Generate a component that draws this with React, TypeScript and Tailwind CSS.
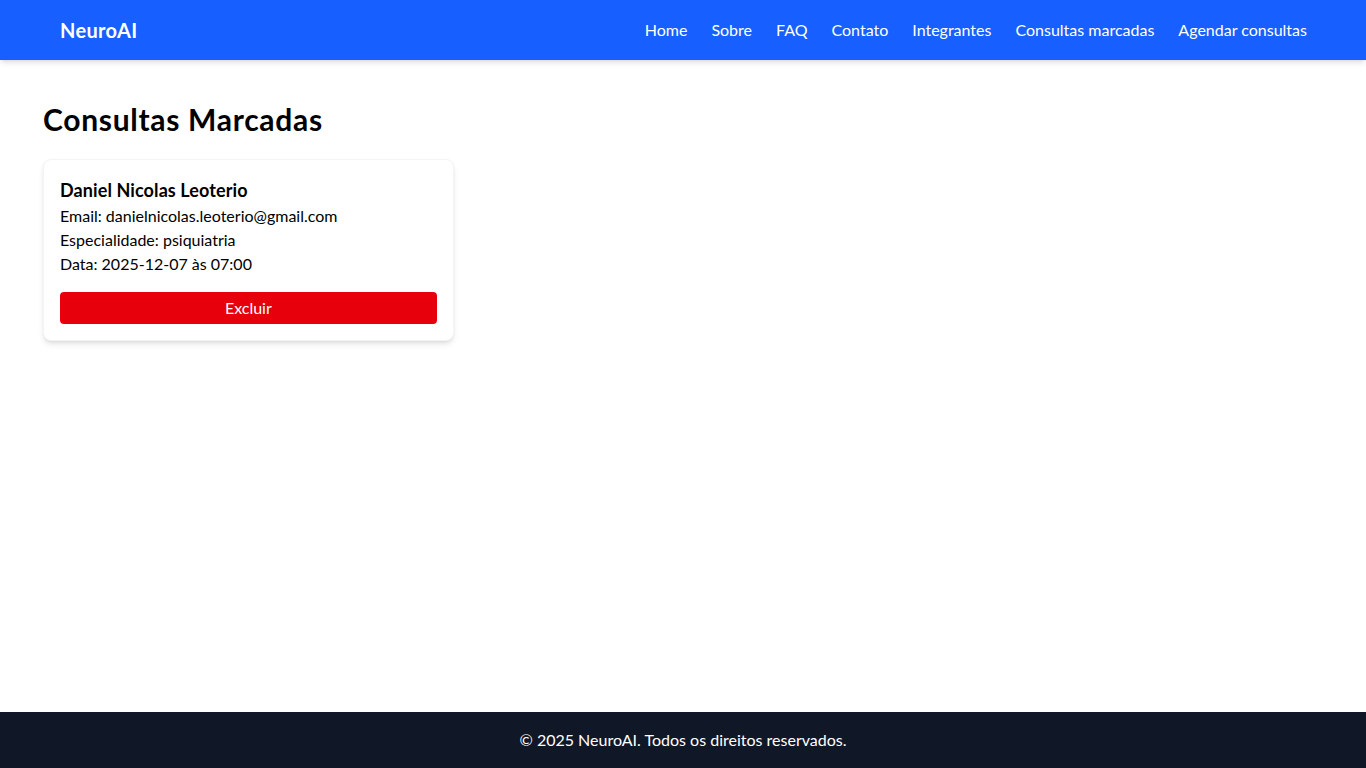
import React from "react";

const links = ["Home", "Sobre", "FAQ", "Contato", "Integrantes", "Consultas marcadas", "Agendar consultas"];

export default function App() {
  return (
    <div className="min-h-screen flex flex-col bg-white text-black" style={{ fontFamily: 'Lato, "Open Sans", sans-serif' }}>
      <header className="h-[60px] bg-[#175ffe] shadow-md flex items-center justify-between pl-[60px] pr-[59px] text-white">
        <div className="text-xl font-bold tracking-[0.3px]">NeuroAI</div>
        <nav className="flex gap-6 text-base">
          {links.map((l) => (
            <a key={l} className="cursor-pointer">{l}</a>
          ))}
        </nav>
      </header>
      <main className="flex-1 px-[43px] pt-[41px]">
        <h1 className="text-3xl font-bold tracking-[0.7px] mb-[22px]">Consultas Marcadas</h1>
        <div className="grid grid-cols-3 gap-6">
          <div className="bg-white rounded-lg shadow-md border border-gray-100 p-4">
            <h2 className="text-lg font-bold tracking-[0.1px]">Daniel Nicolas Leoterio</h2>
            <p>Email: danielnicolas.leoterio@gmail.com</p>
            <p>Especialidade: psiquiatria</p>
            <p>Data: 2025-12-07 às 07:00</p>
            <button className="mt-4 w-full h-8 bg-[#e7000b] text-white rounded">Excluir</button>
          </div>
        </div>
      </main>
      <footer className="h-14 bg-[#101828] text-white flex items-center justify-center">
        © 2025 NeuroAI. Todos os direitos reservados.
      </footer>
    </div>
  );
}
